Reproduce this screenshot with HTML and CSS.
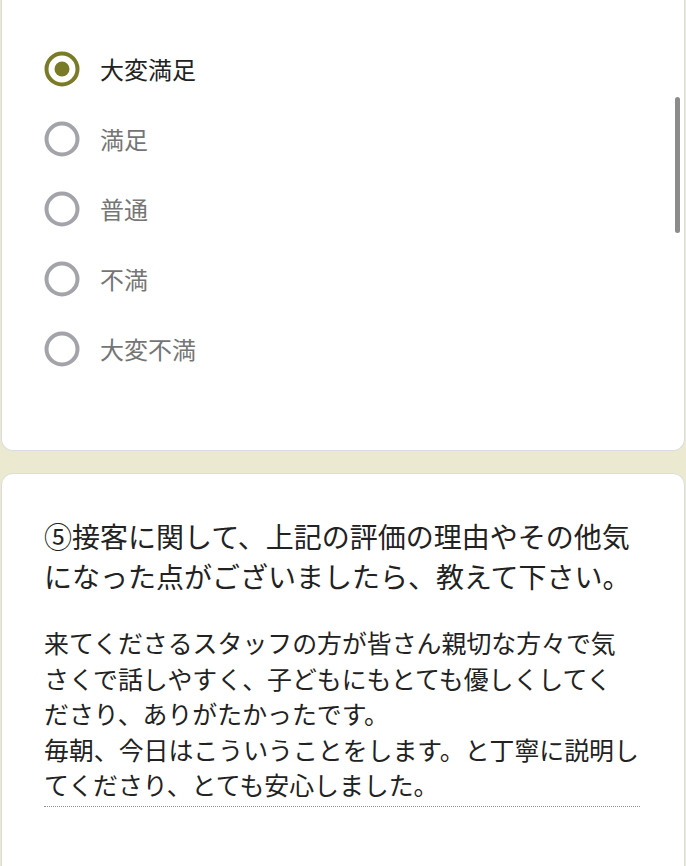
FILE: index.html
```html
<!DOCTYPE html>
<html lang="ja">
<head>
<meta charset="utf-8">
<title>アンケート</title>
<link rel="stylesheet" href="styles.css">
</head>
<body>
<div class="page">
  <section class="card card-top">
    <ul class="options">
      <li class="option selected">
        <svg class="radio" viewBox="0 0 36 36" width="36" height="36"><circle cx="18" cy="18" r="15.5" fill="none" stroke="#7a7b26" stroke-width="4"/><circle cx="18" cy="18" r="7.5" fill="#7a7b26"/></svg>
        <span class="label">大変満足</span>
      </li>
      <li class="option">
        <svg class="radio" viewBox="0 0 36 36" width="36" height="36"><circle cx="18" cy="18" r="15.5" fill="none" stroke="#a2a4a9" stroke-width="4"/></svg>
        <span class="label">満足</span>
      </li>
      <li class="option">
        <svg class="radio" viewBox="0 0 36 36" width="36" height="36"><circle cx="18" cy="18" r="15.5" fill="none" stroke="#a2a4a9" stroke-width="4"/></svg>
        <span class="label">普通</span>
      </li>
      <li class="option">
        <svg class="radio" viewBox="0 0 36 36" width="36" height="36"><circle cx="18" cy="18" r="15.5" fill="none" stroke="#a2a4a9" stroke-width="4"/></svg>
        <span class="label">不満</span>
      </li>
      <li class="option">
        <svg class="radio" viewBox="0 0 36 36" width="36" height="36"><circle cx="18" cy="18" r="15.5" fill="none" stroke="#a2a4a9" stroke-width="4"/></svg>
        <span class="label">大変不満</span>
      </li>
    </ul>
  </section>
  <section class="card card-q">
    <h2 class="question">⑤接客に関して、上記の評価の理由やその他気<br>になった点がございましたら、教えて下さい。</h2>
    <div class="answer">来てくださるスタッフの方が皆さん親切な方々で気<br>さくで話しやすく、子どもにもとても優しくしてく<br>ださり、ありがたかったです。<br>毎朝、今日はこういうことをします。と丁寧に説明し<br>てくださり、とても安心しました。</div>
  </section>
  <div class="scrollbar"></div>
</div>
</body>
</html>
```

FILE: styles.css
```css
html, body {
  margin: 0;
  padding: 0;
  background: #ebead0;
  height: 100%;
  overflow: hidden;
}
body {
  font-family: "Noto Sans CJK JP", "Noto Sans", sans-serif;
  color: #202124;
}
.page {
  position: relative;
  height: 866px;
  overflow: hidden;
}
.card {
  background: #ffffff;
  border: 1px solid #dadce0;
  border-radius: 12px;
  margin: 0 0 0 1px;
  width: 684px;
  box-sizing: border-box;
}
.card-top {
  border-top: none;
  border-top-left-radius: 0;
  border-top-right-radius: 0;
  padding: 34px 0 66px 42px;
}
.options {
  list-style: none;
  margin: 0;
  padding: 0;
}
.option {
  display: flex;
  align-items: center;
  height: 70px;
}
.radio {
  display: block;
  flex: none;
  width: 36px;
  height: 36px;
}
.label {
  margin-left: 20px;
  font-size: 24px;
  line-height: 32px;
  color: #757575;
}
.option.selected .label {
  color: #222222;
}
.card-q {
  margin-top: 22px;
  padding: 42px 44px 120px 42px;
}
.question {
  margin: 0;
  font-size: 28px;
  font-weight: normal;
  line-height: 40px;
  color: #222222;
  white-space: nowrap;
}
.answer {
  margin-top: 29px;
  font-size: 24.9px;
  line-height: 35.5px;
  color: #222222;
  white-space: nowrap;
  padding-bottom: 3px;
  border-bottom: 1px dotted #8f8f8f;
}
.scrollbar {
  position: absolute;
  left: 675px;
  top: 97px;
  width: 5px;
  height: 136px;
  border-radius: 3px;
  background: #8c8c8c;
}
```
